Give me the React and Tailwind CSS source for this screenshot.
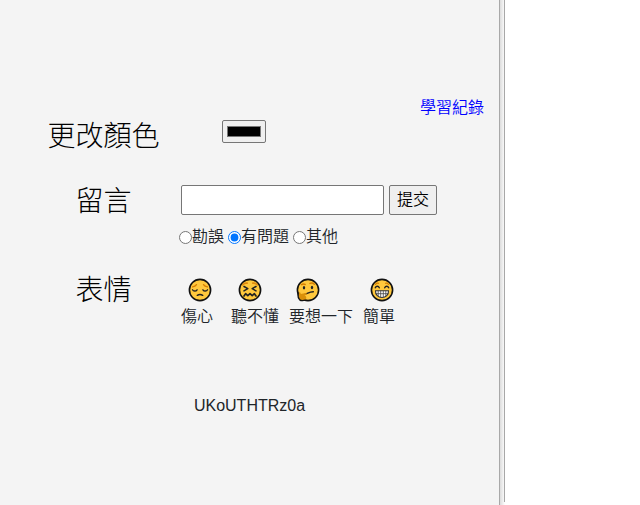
import { useState } from "react";

function Face({ children }) {
  return (
    <svg viewBox="0 0 24 24" className="h-6 w-6" fill="none" aria-hidden="true">
      <circle cx="12" cy="12" r="10.6" fill="#ffc83d" stroke="#111" strokeWidth="1.6" />
      {children}
    </svg>
  );
}

const SadFace = () => (
  <Face>
    <path d="M4.5 8.800c1.700-.2 3.200-1 4-2.200M19.500 8.800c-1.700-.2-3.200-1-4-2.200" stroke="#d67d00" strokeWidth="1.300" strokeLinecap="round" />
    <path d="M4.500 11.800c.8 1.600 3.600 1.600 4.600 0M14.900 11.800c1 1.600 3.800 1.600 4.600 0" stroke="#222" strokeWidth="1.300" strokeLinecap="round" />
    <path d="M9.300 17.300c1.300-.8 4.100-.8 5.400 0" stroke="#222" strokeWidth="1.500" strokeLinecap="round" />
  </Face>
);

const ConfusedFace = () => (
  <Face>
    <path d="M4.800 6.800c1.300-1.500 2.700-1.800 4.400-1.600M19.200 6.800c-1.300-1.500-2.700-1.800-4.400-1.600" stroke="#e08a10" strokeWidth="1.700" strokeLinecap="round" />
    <path d="M6 8.500l3.800 2.200-3.800 2.200M18 8.500l-3.800 2.200 3.800 2.200" stroke="#222" strokeWidth="1.500" strokeLinecap="round" strokeLinejoin="round" />
    <path d="M6 18l1.600-2.300 2.200 2 2.200-2 2.200 2 2.200-2L18 18" stroke="#222" strokeWidth="1.700" strokeLinecap="round" strokeLinejoin="round" />
  </Face>
);

const ThinkingFace = () => (
  <Face>
    <path d="M5.500 6.700c1.200-.8 2.500-.8 3.700-.2M14 5.400c1.700-.7 3.200-.3 4.300.8" stroke="#d67d00" strokeWidth="1.400" strokeLinecap="round" />
    <ellipse cx="8" cy="9.700" rx="1.200" ry="1.700" fill="#222" />
    <ellipse cx="16" cy="9.500" rx="1.200" ry="1.700" fill="#222" />
    <path d="M9.500 15.800c2.200-.2 3.200-1.800 7.800-2" stroke="#222" strokeWidth="1.500" strokeLinecap="round" />
    <path d="M2.600 15c.8-1.200 1.900-.8 2.200 1l4.800-1c1.600-.1 1.700 1.400.3 1.900l-1.400.6c2.200.3 2.400 3.400.6 4.600-1.900 1-4.300.6-5.400-.5-1.100-1.200-1.500-4.200-1.100-6.600z" fill="#d99009" />
    <path d="M2.200 15c-.4 2.600-.1 5.300 1.300 6.600 1.400 1.200 3.800 1.200 5.700.6" stroke="#111" strokeWidth="1.400" strokeLinecap="round" />
  </Face>
);

const GrinFace = () => (
  <Face>
    <path d="M5.500 6.300c.8-1 2-1.300 3-1M18.500 6.300c-.8-1-2-1.300-3-1" stroke="#d67d00" strokeWidth="1.200" strokeLinecap="round" />
    <path d="M5.300 9.800c.8-2 3.200-2 4 0M14.700 9.800c.8-2 3.200-2 4 0" stroke="#222" strokeWidth="1.400" strokeLinecap="round" />
    <path d="M5.500 12.700h13c.2 4.300-2.700 6.800-6.500 6.800s-6.700-2.500-6.500-6.800z" fill="#fff" stroke="#333" strokeWidth="1.100" />
    <path d="M8.200 12.700v5.300M10.700 12.700v6.800M13.300 12.700v6.800M15.800 12.700v5.300M5.700 15.700h12.600" stroke="#444" strokeWidth=".8" />
  </Face>
);

const moods = [
  { label: "傷心", Icon: SadFace },
  { label: "聽不懂", Icon: ConfusedFace },
  { label: "要想一下", Icon: ThinkingFace },
  { label: "簡單", Icon: GrinFace },
];

const topics = ["勘誤", "有問題", "其他"];

const titleClass = "text-[28px] leading-[34px] font-light text-black";

function Row({ title, htmlFor, children }) {
  return (
    <div className="grid grid-cols-[181px_1fr]">
      <div className="flex justify-center pl-[26px]">
        {htmlFor ? (
          <label htmlFor={htmlFor} className={titleClass}>{title}</label>
        ) : (
          <h2 className={titleClass}>{title}</h2>
        )}
      </div>
      <div>{children}</div>
    </div>
  );
}

export default function App() {
  const [color, setColor] = useState("#000000");
  const [topic, setTopic] = useState("有問題");

  return (
    <div className="flex h-screen bg-white font-['Liberation_Sans','Noto_Sans_CJK_TC',sans-serif] text-base leading-6 font-[350] text-[#212529]">
      <main className="min-w-0 flex-1 bg-[#f4f4f4] pt-24">
        <div className="flex justify-end pr-[15px]">
          <a href="#records" className="text-[#0000ff]">學習紀錄</a>
        </div>

        <Row title="更改顏色" htmlFor="color">
          <div className="pl-[41px]">
            <input
              id="color"
              type="color"
              value={color}
              onChange={(e) => setColor(e.target.value)}
              className="block h-[23px] w-11 rounded-[2px] border border-[#767676] bg-[#efefef] px-0.5 py-px"
            />
          </div>
        </Row>

        <form className="mt-[31px]" onSubmit={(e) => e.preventDefault()}>
          <Row title="留言" htmlFor="message">
            <div className="flex gap-[5px]">
              <input id="message" type="text" className="h-[30px] w-[203px] rounded-[2px] border border-[#767676] bg-white px-1" />
              <button type="submit" className="h-[30px] w-12 rounded-[2px] border border-[#767676] bg-[#efefef] text-black">提交</button>
            </div>
            <div className="-ml-0.5 mt-2.5 flex gap-1">
              {topics.map((name) => (
                <label key={name} className="flex items-center">
                  <input
                    type="radio"
                    name="topic"
                    value={name}
                    checked={topic === name}
                    onChange={() => setTopic(name)}
                    className="h-[13px] w-[13px]"
                  />
                  {name}
                </label>
              ))}
            </div>
          </Row>
        </form>

        <section className="mt-[25px]">
          <Row title="表情">
            <div className="flex gap-2.5 pt-1">
              {moods.map(({ label, Icon }) => (
                <button key={label} type="button" className="min-w-10 text-left">
                  <span className="block pl-[7px]"><Icon /></span>
                  <span className="mt-[3px] block">{label}</span>
                </button>
              ))}
            </div>
          </Row>
        </section>

        <p className="mt-[65px] text-center">UKoUTHTRz0a</p>
      </main>

      <div className="w-[6px] border-l border-[#a8a8a8] bg-linear-to-r from-[#dcdcdc] to-white pb-[3px]">
        <div className="h-full border-r border-[#a8a8a8]" />
      </div>
      <aside className="w-[135px] bg-white" />
    </div>
  );
}
